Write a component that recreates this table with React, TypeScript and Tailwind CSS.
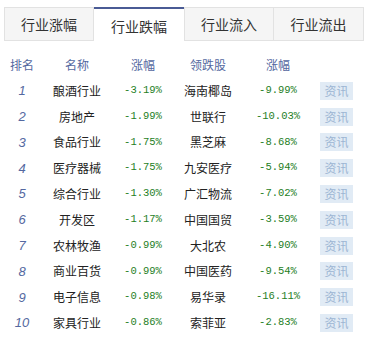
import React from 'react';

const tabs = ['行业涨幅', '行业跌幅', '行业流入', '行业流出'];

const rows = [
  ['酿酒行业', '-3.19%', '海南椰岛', '-9.99%'],
  ['房地产', '-1.99%', '世联行', '-10.03%'],
  ['食品行业', '-1.75%', '黑芝麻', '-8.68%'],
  ['医疗器械', '-1.75%', '九安医疗', '-5.94%'],
  ['综合行业', '-1.30%', '广汇物流', '-7.02%'],
  ['开发区', '-1.17%', '中国国贸', '-3.59%'],
  ['农林牧渔', '-0.99%', '大北农', '-4.90%'],
  ['商业百货', '-0.99%', '中国医药', '-9.54%'],
  ['电子信息', '-0.98%', '易华录', '-16.11%'],
  ['家具行业', '-0.86%', '索菲亚', '-2.83%'],
];

const cjk = "font-['Noto_Sans_CJK_SC',sans-serif]";
const mono = "font-['Liberation_Mono',monospace]";

export default function App() {
  return (
    <div className={`w-[368px] h-[343px] bg-white ${cjk}`}>
      {/* tabs */}
      <div className="flex pl-[4px] pt-[7px]">
        {tabs.map((t, i) =>
          i === 1 ? (
            <div
              key={t}
              className="w-[90px] h-[34px] flex items-center justify-center bg-white border-t-2 border-t-[#4a5b95] text-[14px] text-[#333] pt-[2px]"
            >
              {t}
            </div>
          ) : (
            <div
              key={t}
              className={`w-[90px] h-[34px] flex items-center justify-center bg-[#f5f5f5] border border-[#e2e2e2] text-[14px] text-[#333] ${i === 0 ? '' : i === 2 ? 'border-l-[#e2e2e2]' : 'border-l-0'}`}
            >
              {t}
            </div>
          )
        )}
      </div>

      {/* header */}
      <div className="flex items-center h-[26px] mt-[11px] text-[12px] text-[#5468a0]">
        <div className="w-[44px] text-center">排名</div>
        <div className="w-[66px] text-center">名称</div>
        <div className="w-[66px] text-center">涨幅</div>
        <div className="w-[64px] text-center">领跌股</div>
        <div className="w-[76px] text-center">涨幅</div>
      </div>

      {/* rows */}
      <div className="flex flex-col">
        {rows.map((r, i) => (
          <div key={r[0]} className="flex items-center h-[25.8px] text-[12px]">
            <div className="w-[44px] text-center italic text-[13px] text-[#5468a0] font-['Liberation_Sans',sans-serif]">
              {i + 1}
            </div>
            <div className="w-[66px] text-center text-[#222]">{r[0]}</div>
            <div className={`w-[66px] text-center text-[10.5px] text-[#1e7e1e] ${mono}`}>{r[1]}</div>
            <div className="w-[64px] text-center text-[#222]">{r[2]}</div>
            <div className={`w-[76px] text-center text-[10.5px] text-[#1e7e1e] ${mono}`}>{r[3]}</div>
            <div className="ml-[4px] w-[33px] h-[18px] flex items-center justify-center bg-[#e1ebf5] text-[#9cb5d3] text-[12px]">
              资讯
            </div>
          </div>
        ))}
      </div>
    </div>
  );
}
